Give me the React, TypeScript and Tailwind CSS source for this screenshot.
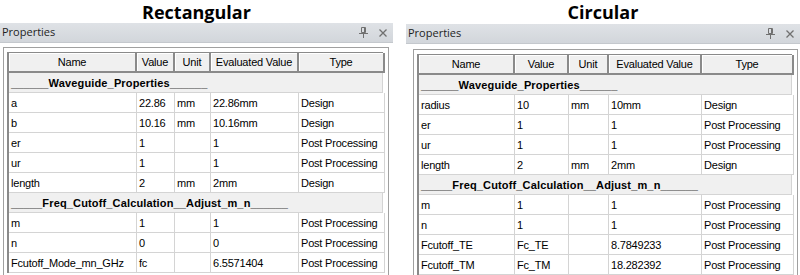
import React from 'react';

type Row = { kind: 'section'; label: string } | { kind: 'data'; cells: string[] };

interface PanelProps {
  heading: string;
  width: number;
  headTop: string;
  cols: string;
  frameInset: string;
  rows: Row[];
}

const headers = ['Name', 'Value', 'Unit', 'Evaluated Value', 'Type'];

const PinIcon = () => (
  <svg width="9" height="11" viewBox="0 0 9 11" className="text-[#707070]">
    <path d="M2.5 0.5h4v5h-4z" fill="none" stroke="currentColor" />
    <path d="M5.5 1v4.5" stroke="currentColor" />
    <path d="M0 6.5h9" stroke="currentColor" />
    <path d="M4.5 7v4" stroke="currentColor" />
  </svg>
);

const CloseIcon = () => (
  <svg width="8" height="8" viewBox="0 0 8 8" className="text-[#707070]">
    <path d="M0.5 0.5l7 7M7.5 0.5l-7 7" stroke="currentColor" strokeWidth="1.3" />
  </svg>
);

const Panel: React.FC<PanelProps> = ({ heading, width, headTop, cols, frameInset, rows }) => (
  <div className="flex flex-col shrink-0 h-full" style={{ width }}>
    <div className={`${headTop} flex items-center justify-center font-['Open_Sans'] font-bold text-[18px] text-black leading-none`}>
      {heading}
    </div>
    <div className="h-[20px] flex items-center justify-between pl-[2px] pr-[6px] bg-gradient-to-b from-[#dfe2e6] to-[#d2d6db] border-b border-[#c4c8cd]">
      <span className="font-['Open_Sans'] text-[11px] text-[#1e1e1e]">Properties</span>
      <div className="flex items-center gap-[11px]">
        <PinIcon />
        <CloseIcon />
      </div>
    </div>
    <div className={`flex-1 ${frameInset}`}>
      <div className="h-full border border-b-0 border-[#a0a0a0] pl-[3px] pt-[4px] pr-[5px]">
        <div className="border-l-2 border-t border-[#8a8a8a]">
          <div className={`grid ${cols} h-[20px]`}>
            {headers.map((h) => (
              <div
                key={h}
                className="flex items-center justify-center bg-[#f0f0f0] border-r-2 border-b-2 border-[#8a8a8a] shadow-[inset_1px_1px_0_#ffffff] text-[11px] tracking-[-0.2px] text-black"
              >
                {h}
              </div>
            ))}
          </div>
          {rows.map((r, i) =>
            r.kind === 'section' ? (
              <div
                key={i}
                className="h-[20px] flex items-center pl-[2px] pt-[1px] bg-[#f0f0f0] border-b border-r border-[#d4d4d4] font-bold text-[11px] tracking-[0.15px] text-black"
              >
                {r.label}
              </div>
            ) : (
              <div key={i} className={`grid ${cols} h-[20px] bg-white`}>
                {r.cells.map((c, j) => (
                  <div
                    key={j}
                    className="flex items-center pl-[2px] pt-[1px] border-r border-b border-[#d4d4d4] text-[11px] tracking-[-0.2px] text-black whitespace-nowrap overflow-hidden"
                  >
                    {c}
                  </div>
                ))}
              </div>
            )
          )}
        </div>
      </div>
    </div>
  </div>
);

const rectRows: Row[] = [
  { kind: 'section', label: '______Waveguide_Properties______' },
  { kind: 'data', cells: ['a', '22.86', 'mm', '22.86mm', 'Design'] },
  { kind: 'data', cells: ['b', '10.16', 'mm', '10.16mm', 'Design'] },
  { kind: 'data', cells: ['er', '1', '', '1', 'Post Processing'] },
  { kind: 'data', cells: ['ur', '1', '', '1', 'Post Processing'] },
  { kind: 'data', cells: ['length', '2', 'mm', '2mm', 'Design'] },
  { kind: 'section', label: '_____Freq_Cutoff_Calculation__Adjust_m_n______' },
  { kind: 'data', cells: ['m', '1', '', '1', 'Post Processing'] },
  { kind: 'data', cells: ['n', '0', '', '0', 'Post Processing'] },
  { kind: 'data', cells: ['Fcutoff_Mode_mn_GHz', 'fc', '', '6.5571404', 'Post Processing'] },
];

const circRows: Row[] = [
  { kind: 'section', label: '______Waveguide_Properties______' },
  { kind: 'data', cells: ['radius', '10', 'mm', '10mm', 'Design'] },
  { kind: 'data', cells: ['er', '1', '', '1', 'Post Processing'] },
  { kind: 'data', cells: ['ur', '1', '', '1', 'Post Processing'] },
  { kind: 'data', cells: ['length', '2', 'mm', '2mm', 'Design'] },
  { kind: 'section', label: '_____Freq_Cutoff_Calculation__Adjust_m_n______' },
  { kind: 'data', cells: ['m', '1', '', '1', 'Post Processing'] },
  { kind: 'data', cells: ['n', '1', '', '1', 'Post Processing'] },
  { kind: 'data', cells: ['Fcutoff_TE', 'Fc_TE', '', '8.7849233', 'Post Processing'] },
  { kind: 'data', cells: ['Fcutoff_TM', 'Fc_TM', '', '18.282392', 'Post Processing'] },
];

export default function App() {
  return (
    <div className="w-[800px] h-[275px] bg-white flex overflow-hidden font-['Liberation_Sans',Arial,sans-serif]">
      <Panel
        heading="Rectangular"
        width={393}
        headTop="h-[23px]"
        cols="grid-cols-[128px_38px_36px_88px_86px]"
        frameInset="pt-[4px] pl-[3px] pr-[4px]"
        rows={rectRows}
      />
      <div className="w-[13px] shrink-0" />
      <Panel
        heading="Circular"
        width={394}
        headTop="h-[25px]"
        cols="grid-cols-[96px_54px_40px_93px_92px]"
        frameInset="pt-[5px] pl-[7px] pr-[2px]"
        rows={circRows}
      />
    </div>
  );
}
